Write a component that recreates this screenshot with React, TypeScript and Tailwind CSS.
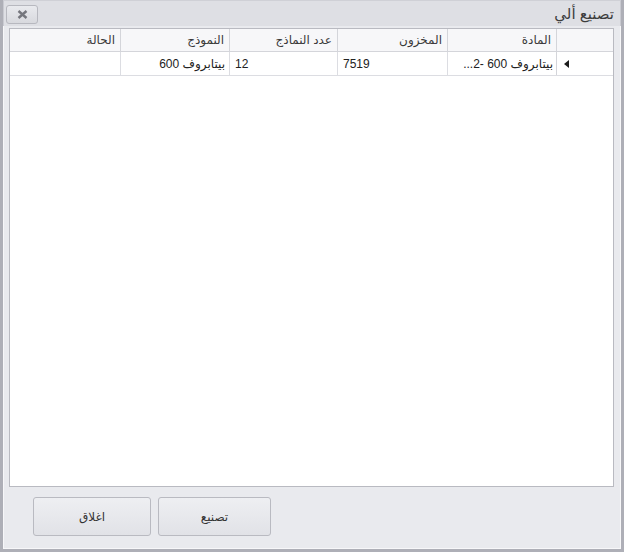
import React from 'react';

const font = { fontFamily: '"Liberation Sans", "DejaVu Sans", sans-serif' };

const headers = ['', 'المادة', 'المخزون', 'عدد النماذج', 'النموذج', 'الحالة'];

export default function App() {
  return (
    <div dir="rtl" style={font} className="w-[624px] h-[552px] bg-[#aeafb7] px-[3px] pb-[3px] flex flex-col">
      {/* Title bar */}
      <div className="h-[26px] shrink-0 bg-[#dedfe4] border-t border-[#cfd0d6] border-x border-x-[#c9cad1] flex items-center justify-between pr-[6px] pl-[2px]">
        <span className="text-[15px] text-[#3c3c3c] leading-none">تصنيع ألي</span>
        <button className="w-[32px] h-[19px] mt-[1px] rounded-[3px] border border-[#b7b8bf] bg-gradient-to-b from-[#e9eaee] to-[#d8d9de] flex items-center justify-center">
          <svg width="11" height="9" viewBox="0 0 11 9">
            <path d="M1.5 1 L9.5 8 M9.5 1 L1.5 8" stroke="#75767d" strokeWidth="2.4" />
          </svg>
        </button>
      </div>

      {/* Body */}
      <div className="flex-1 flex flex-col bg-[#e9eaee] border-x border-b border-[#f7f7f9] pt-[2px] pr-[6px] pl-[5px]">
        {/* Grid */}
        <div className="h-[459px] bg-white border border-[#b9bac1] flex flex-col">
          <div className="grid grid-cols-[57px_109px_110px_108px_109px_1fr] h-[23px] bg-[#f7f7f9] border-b border-[#d4d5da]">
            {headers.map((h, i) => (
              <div key={i} className={`text-[12px] text-[#3a3a3a] px-[5px] flex items-center ${i < 5 ? 'border-l border-[#d4d5da]' : ''}`}>
                {h}
              </div>
            ))}
          </div>
          <div className="grid grid-cols-[57px_109px_110px_108px_109px_1fr] h-[24px] border-b border-[#dcdde2] text-[12px] text-[#222]">
            <div className="border-l border-[#d4d5da] flex items-center justify-end pl-[7px]">
              <svg width="5" height="8" viewBox="0 0 5 8">
                <path d="M5 0 L0 4 L5 8 Z" fill="#1c1c1c" />
              </svg>
            </div>
            <div className="border-l border-[#dcdde2] flex items-center px-[3px] overflow-hidden whitespace-nowrap">
              بيتابروف 600 -2...
            </div>
            <div className="border-l border-[#dcdde2] flex items-center justify-end px-[5px]">
              <span dir="ltr">7519</span>
            </div>
            <div className="border-l border-[#dcdde2] flex items-center justify-end px-[5px]">
              <span dir="ltr">12</span>
            </div>
            <div className="border-l border-[#dcdde2] flex items-center px-[4px]">بيتابروف 600</div>
            <div />
          </div>
        </div>

        {/* Footer */}
        <div className="flex justify-end gap-[7px] pl-[24px] pt-[10px]">
          <button className="w-[113px] h-[39px] rounded-[3px] border border-[#b9bac1] bg-gradient-to-b from-[#eeeff2] to-[#e1e2e7] text-[12px] text-[#333]">
            تصنيع
          </button>
          <button className="w-[118px] h-[39px] rounded-[3px] border border-[#b9bac1] bg-gradient-to-b from-[#eeeff2] to-[#e1e2e7] text-[12px] text-[#333]">
            اغلاق
          </button>
        </div>
      </div>
    </div>
  );
}
